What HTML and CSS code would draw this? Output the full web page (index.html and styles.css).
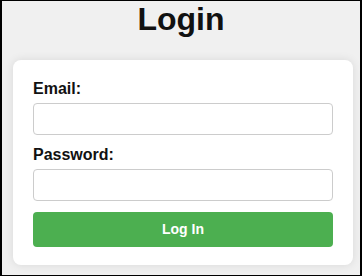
FILE: index.html
```html
<!DOCTYPE html>
<html lang="en">
<head>
<meta charset="utf-8">
<title>Login</title>
<link rel="stylesheet" href="styles.css">
</head>
<body>
<div class="frame">
  <h1 class="title">Login</h1>
  <form class="card">
    <label class="label" for="email">Email:</label>
    <input class="field" id="email" type="email">
    <label class="label" for="password">Password:</label>
    <input class="field" id="password" type="password">
    <button class="btn" type="button">Log In</button>
  </form>
</div>
</body>
</html>
```

FILE: styles.css
```css
html, body {
  margin: 0;
  padding: 0;
}
body {
  font-family: "Liberation Sans", Arial, sans-serif;
  color: #111;
}
.frame {
  box-sizing: border-box;
  width: 362px;
  height: 276px;
  border-style: solid;
  border-color: #000;
  border-width: 1px 2px 1px 2px;
  background: #f0f0f0;
  overflow: hidden;
}
.title {
  margin: 0 0 22px;
  font-size: 32px;
  font-weight: bold;
  line-height: 37px;
  text-align: center;
  color: #111;
}
.card {
  box-sizing: border-box;
  width: 340px;
  margin: 0 0 0 11px;
  padding: 20px 20px 18px;
  background: #fff;
  border-radius: 8px;
  box-shadow: 0 0 10px rgba(0, 0, 0, 0.1);
  display: flex;
  flex-direction: column;
}
.label {
  display: block;
  font-size: 16px;
  font-weight: bold;
  line-height: 18px;
  margin-bottom: 5px;
  color: #111;
}
.field {
  box-sizing: border-box;
  width: 100%;
  height: 32px;
  margin: 0 0 11px;
  padding: 0 8px;
  border: 1px solid #ccc;
  border-radius: 4px;
  background: #fff;
  font-family: inherit;
  font-size: 14px;
}
.btn {
  box-sizing: border-box;
  width: 100%;
  height: 35px;
  margin: 0;
  border: none;
  border-radius: 4px;
  background: #4caf50;
  color: #fff;
  font-family: inherit;
  font-size: 14px;
  font-weight: bold;
  line-height: 15px;
}
```
